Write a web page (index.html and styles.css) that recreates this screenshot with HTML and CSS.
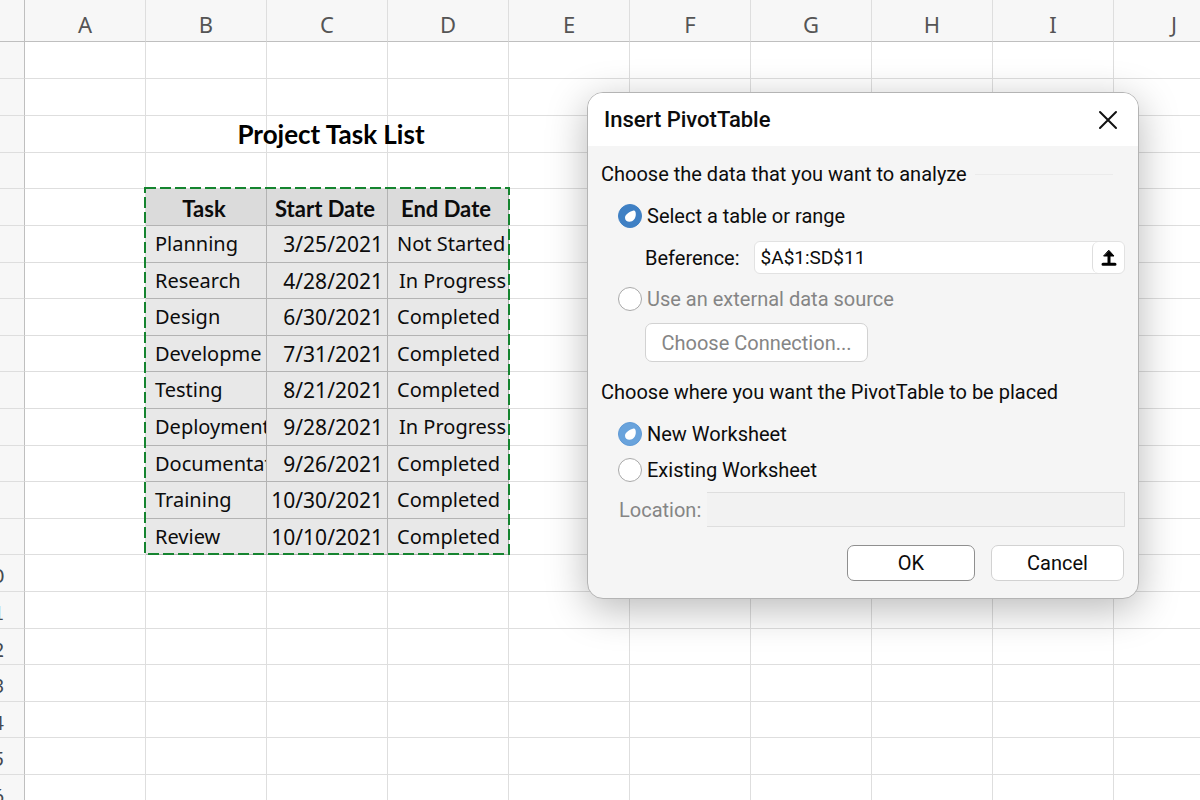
FILE: index.html
```html
<!DOCTYPE html>
<html lang="en">
<head>
<meta charset="UTF-8">
<meta name="viewport" content="width=device-width, initial-scale=1.0">
<title>Insert PivotTable</title>
<link rel="stylesheet" href="styles.css">
</head>
<body>
    <main class="sheet">
        <table class="grid">
            <thead>
                <tr id="columns"><th class="corner"></th></tr>
            </thead>
            <tbody id="rows"></tbody>
        </table>
        <svg class="marquee" aria-hidden="true"><rect x="1" y="1" width="364" height="366"/></svg>
    </main>

    <div class="dialog" role="dialog" aria-labelledby="dialogTitle">
        <div class="dialog-header">
            <h2 id="dialogTitle">Insert PivotTable</h2>
            <button class="close" type="button" aria-label="Close">
                <svg width="20" height="20" viewBox="0 0 20 20"><path d="M2 2L18 18M18 2L2 18"/></svg>
            </button>
        </div>

        <form class="dialog-body">
            <p class="group-title ruled">Choose the data that you want to analyze</p>
            <div class="option">
                <input type="radio" name="source" id="range" checked>
                <label for="range">Select a table or range</label>
            </div>
            <div class="reference">
                <label for="reference">Beference:</label>
                <div class="picker">
                    <input type="text" id="reference" value="$A$1:SD$11">
                    <button type="button" aria-label="Collapse dialog">
                        <svg width="16" height="18" viewBox="0 0 16 18"><path class="tip" d="M8 1.5L13 7H3Z"/><path d="M8 5V15M2 15.2H14"/></svg>
                    </button>
                </div>
            </div>
            <div class="option muted">
                <input type="radio" name="source" id="external">
                <label for="external">Use an external data source</label>
            </div>
            <button class="connection" type="button">Choose Connection...</button>

            <p class="group-title">Choose where you want the PivotTable to be placed</p>
            <div class="option light">
                <input type="radio" name="place" id="newSheet" checked>
                <label for="newSheet">New Worksheet</label>
            </div>
            <div class="option">
                <input type="radio" name="place" id="existing">
                <label for="existing">Existing Worksheet</label>
            </div>
            <div class="location">
                <label for="location">Location:</label>
                <input type="text" id="location" disabled>
            </div>

            <div class="actions">
                <button class="ok" type="button">OK</button>
                <button class="cancel" type="button">Cancel</button>
            </div>
        </form>
    </div>

<script>
var letters = ["A", "B", "C", "D", "E", "F", "G", "H", "I", "J"];
var tasks = [
    ["Task", "Start Date", "End Date"],
    ["Planning", "3/25/2021", "Not Started"],
    ["Research", "4/28/2021", "In Progress"],
    ["Design", "6/30/2021", "Completed"],
    ["Developme", "7/31/2021", "Completed"],
    ["Testing", "8/21/2021", "Completed"],
    ["Deployment", "9/28/2021", "In Progress"],
    ["Documentat", "9/26/2021", "Completed"],
    ["Training", "10/30/2021", "Completed"],
    ["Review", "10/10/2021", "Completed"]
];
var titleRow = 2;
var firstTaskRow = 4;
var firstNumberedRow = 14;

letters.forEach(function (letter) {
    var th = document.createElement("th");
    th.textContent = letter;
    document.getElementById("columns").appendChild(th);
});

for (var r = 0; r < 21; r++) {
    var tr = document.createElement("tr");
    var number = document.createElement("th");
    if (r >= firstNumberedRow) {
        number.textContent = r - 4;
    }
    tr.appendChild(number);

    var task = tasks[r - firstTaskRow];
    for (var c = 0; c < letters.length; c++) {
        var td = document.createElement("td");
        if (r === titleRow && c === 2) {
            td.innerHTML = '<div class="sheet-title">Project Task List</div>';
        }
        // the list fills columns B to D
        if (task && c > 0 && c < 4) {
            td.textContent = task[c - 1];
            td.className = r === firstTaskRow ? "selected head" : "selected";
            if (c === 2) td.classList.add("date");
            if (task[c - 1] === "In Progress") td.classList.add("pushed");
        }
        tr.appendChild(td);
    }
    document.getElementById("rows").appendChild(tr);
}
</script>

</body>
</html>
```
FILE: styles.css
```css
* {
    box-sizing: border-box;
}

body {
    margin: 0;
    height: 100vh;
    overflow: hidden;
    background-color: #fff;
    color: #0c0c0c;
    font-family: Roboto, "Liberation Sans", sans-serif;
    font-size: 20px;
    line-height: 24px;
}

/* Sheet */
.sheet {
    position: relative;
    overflow: hidden;
    font-family: "Noto Sans", "Open Sans", sans-serif;
    font-size: 20px;
}

/* row numbers run off the left edge */
.grid {
    width: 1255px;
    margin-left: -20px;
    table-layout: fixed;
    border-collapse: separate;
    border-spacing: 0;
}

.grid th,
.grid td {
    width: 121px;
    height: 37px;
    padding: 0;
    border-right: 1px solid #dedede;
    border-bottom: 1px solid #dedede;
    white-space: nowrap;
}

.grid tbody tr:nth-child(5n+4) > *,
.grid tbody tr:nth-child(5n+7) > * {
    height: 36px;
}

.grid thead th {
    height: 42px;
    padding-top: 6px;
    background-color: #f7f7f7;
    border-bottom-color: #bfbfbf;
    color: #555;
    font-size: 22px;
    font-weight: 400;
}

.grid thead .corner,
.grid tbody th {
    width: 45px;
    border-right-color: #bfbfbf;
}

.grid tbody th {
    padding: 4px 20px 0 0;
    background-color: #f7f7f7;
    color: #444950;
    font-family: Lato, sans-serif;
    font-weight: 400;
    text-align: right;
}

.sheet-title {
    margin: 0 -60px 0 -52px;
    font-family: Lato, sans-serif;
    font-size: 26px;
    font-weight: 700;
    text-align: center;
    color: #000;
}

.grid .selected {
    padding: 0 0 0 9px;
    overflow: hidden;
    background-color: #e8e8e8;
    border-color: #b3b3b3;
}

.grid .head {
    padding: 4px 4px 0 0;
    background-color: #dbdbdb;
    font-family: Lato, sans-serif;
    font-size: 22px;
    font-weight: 700;
    text-align: center;
}

.grid .date:not(.head) {
    padding: 0 4px 0 0;
    font-size: 21px;
    text-align: right;
}

.grid .pushed {
    padding: 0 2px 0 0;
    text-align: right;
}

/* dashed outline of the copied range */
.marquee {
    position: absolute;
    top: 187px;
    left: 144px;
    width: 366px;
    height: 368px;
}

.marquee rect {
    fill: none;
    stroke: #15842f;
    stroke-width: 2;
    stroke-dasharray: 11 4;
}

/* Dialog */
.dialog {
    position: absolute;
    top: 92px;
    left: 587px;
    width: 552px;
    overflow: hidden;
    background-color: #f5f5f5;
    border: 1px solid #b4b4b4;
    border-radius: 16px;
    box-shadow: 0 10px 40px rgba(0, 0, 0, 0.28);
}

.dialog-header {
    display: flex;
    align-items: center;
    justify-content: space-between;
    height: 53px;
    padding: 0 16px;
    background-color: #fff;
}

.dialog-header h2 {
    margin: 0;
    font-size: 22px;
    font-weight: 500;
}

.close {
    display: flex;
    padding: 4px;
    border: none;
    background: none;
}

.close path {
    stroke: #111;
    stroke-width: 2;
    stroke-linecap: round;
}

.dialog-body {
    padding: 16px 13px 17px;
}

.dialog button,
.dialog input[type="text"] {
    font-family: inherit;
    font-size: 20px;
    color: inherit;
}

.group-title {
    display: flex;
    align-items: center;
    margin: 0 0 18px;
}

.ruled::after {
    content: "";
    flex: 1;
    height: 1px;
    margin: 0 12px 0 8px;
    background-color: #ebebeb;
}

.option {
    display: flex;
    align-items: center;
    gap: 5px;
    margin: 12px 0 0 17px;
}

.option input {
    display: flex;
    align-items: center;
    justify-content: center;
    appearance: none;
    width: 24px;
    height: 24px;
    margin: 0;
    background-color: #fff;
    border: 1px solid #a9a9a9;
    border-radius: 50%;
}

.option input:checked {
    background-color: #3f80c4;
    border-color: #3f80c4;
}

.light input:checked {
    background-color: #69a3dc;
    border-color: #5f9ad6;
}

.option input:checked::before {
    content: "";
    width: 12px;
    height: 13px;
    background-color: #fff;
    clip-path: path("M9.5 1C6 2 1 5 1 8.2C1 10.8 3 12.2 5.5 12.2C9 12.2 12 9 11.8 4.5C11.7 2 11 0.6 9.5 1Z");
}

.muted,
.location {
    color: #858585;
}

.reference {
    display: flex;
    align-items: center;
    gap: 14px;
    margin: 13px 0 13px 44px;
}

.picker {
    display: flex;
    flex: 1;
    height: 33px;
    background-color: #fff;
    border: 1px solid #e2e2e2;
    border-radius: 6px;
}

.picker input {
    flex: 1;
    min-width: 0;
    padding: 0 6px;
    border: none;
    background: none;
}

.dialog .picker input {
    font-size: 19px;
}

.picker button {
    display: flex;
    align-items: center;
    justify-content: center;
    width: 32px;
    padding: 0;
    border: none;
    border-left: 1px solid #dedede;
    border-radius: 6px;
    background: none;
}

.picker path {
    fill: none;
    stroke: #000;
    stroke-width: 3;
    stroke-linecap: round;
}

.picker .tip {
    fill: #000;
    stroke-width: 1;
    stroke-linejoin: round;
}

.connection {
    display: block;
    width: 223px;
    height: 39px;
    margin: 12px 0 18px 44px;
    padding: 0;
    background-color: #fff;
    border: 1px solid #d2d2d2;
    border-radius: 7px;
}

.dialog .connection {
    color: #858585;
}

.location {
    display: flex;
    align-items: center;
    gap: 6px;
    margin: 10px 0 18px 18px;
}

.location input {
    flex: 1;
    min-width: 0;
    height: 35px;
    background-color: #f2f2f2;
    border: 1px solid #dedede;
    border-left: none;
}

.actions {
    display: flex;
    justify-content: flex-end;
    gap: 16px;
    padding-right: 1px;
}

.actions button {
    width: 133px;
    height: 36px;
    padding: 0;
    background-color: #fff;
    border: 1px solid #d2d2d2;
    border-radius: 7px;
}

.actions .ok {
    width: 128px;
    border-color: #8f8f8f;
}
```
